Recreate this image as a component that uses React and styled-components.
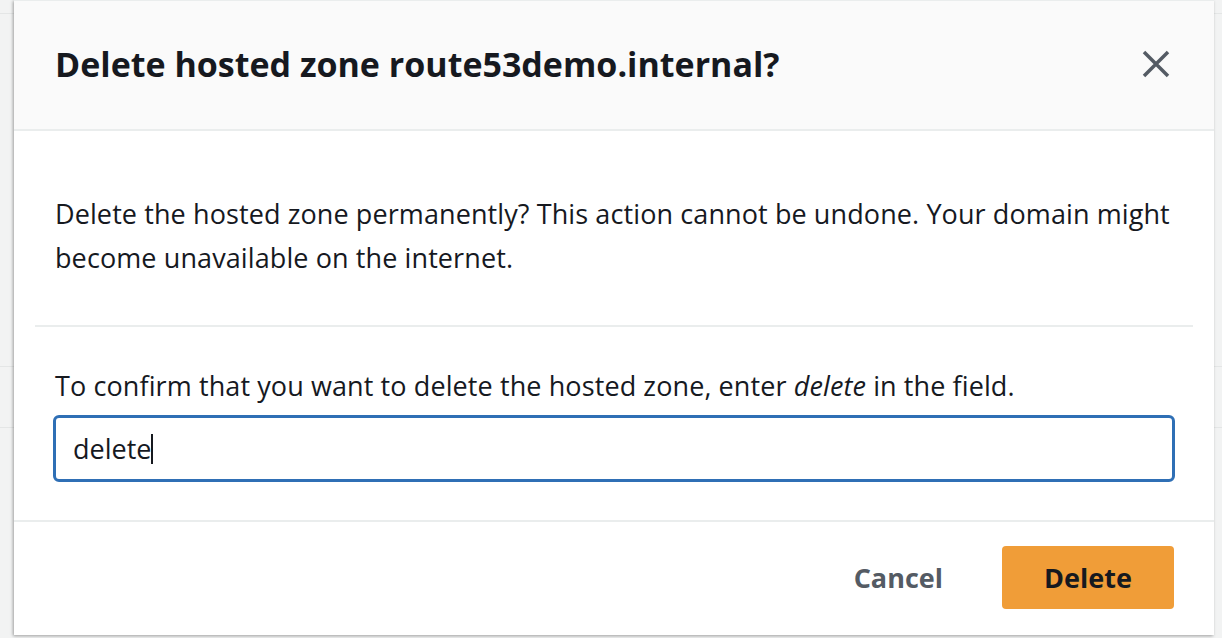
import styled, { createGlobalStyle } from "styled-components";

const GlobalStyle = createGlobalStyle`
  html, body {
    margin: 0;
    padding: 0;
    background: #f2f3f3;
    font-family: "Open Sans", "Noto Sans", sans-serif;
    color: #16191f;
  }
  * { box-sizing: border-box; }
`;

const Page = styled.div`
  position: relative;
  width: 1222px;
  height: 638px;
  overflow: hidden;
  background: #f2f3f3;
`;

const BackRow = styled.div`
  height: ${(p) => p.h}px;
  border-bottom: 1px solid #e4e6e6;
`;

const Overlay = styled.div`
  position: absolute;
  top: 0;
  left: 14px;
  width: 1200px;
`;

const Modal = styled.div`
  display: flex;
  flex-direction: column;
  background: #ffffff;
  height: 635px;
  box-shadow: -1px 1px 3px rgba(0, 0, 0, 0.35);
`;

const Header = styled.div`
  display: flex;
  align-items: center;
  justify-content: space-between;
  height: 131px;
  padding: 0 44px 2px 41px;
  background: #fafafa;
  border-top: 1px solid #eaeded;
  border-bottom: 2px solid #eaeded;
`;

const Title = styled.h2`
  margin: 0;
  font-size: 34px;
  font-weight: 700;
  color: #16191f;
`;

const CloseButton = styled.button`
  display: flex;
  align-items: center;
  justify-content: center;
  border: none;
  background: none;
  padding: 0;
  width: 28px;
  height: 28px;
  color: #545b64;
  cursor: pointer;
`;

const Body = styled.div`
  display: flex;
  flex-direction: column;
  padding: 61px 21px 38px;
  border-bottom: 2px solid #eaeded;
`;

const Section = styled.div`
  display: flex;
  flex-direction: column;
  padding: ${(p) => p.pad};
  border-bottom: ${(p) => (p.divided ? "2px solid #eaeded" : "none")};
`;

const Text = styled.p`
  margin: 0;
  padding-left: ${(p) => p.indent || 0}px;
  font-size: 27px;
  line-height: 44px;
  letter-spacing: 0.1px;
  color: #16191f;

  em {
    font-style: italic;
  }
`;

const Field = styled.div`
  display: flex;
  align-items: center;
  height: 67px;
  margin-top: 7px;
  padding: 0 17px;
  border: 3px solid #2f6fb5;
  border-radius: 6px;
  font-size: 27px;
  color: #16191f;
`;

const Caret = styled.span`
  display: inline-block;
  width: 2px;
  height: 30px;
  background: #16191f;
`;

const Footer = styled.div`
  flex: 1;
  display: flex;
  align-items: center;
  justify-content: flex-end;
  padding: 0 40px 2px 0;
`;

const LinkButton = styled.button`
  border: none;
  background: none;
  padding: 0 59px 0 0;
  font-family: inherit;
  font-size: 27px;
  font-weight: 700;
  color: #545b64;
  cursor: pointer;
`;

const PrimaryButton = styled.button`
  width: 172px;
  height: 63px;
  border: none;
  border-radius: 4px;
  background: #f09d38;
  font-family: inherit;
  font-size: 27px;
  font-weight: 700;
  color: #16191f;
  cursor: pointer;
`;

export default function App() {
  return (
    <>
      <GlobalStyle />
      <Page>
        <BackRow h={14} />
        <BackRow h={353} />
        <BackRow h={61} />
        <Overlay>
          <Modal>
            <Header>
              <Title>Delete hosted zone route53demo.internal?</Title>
              <CloseButton aria-label="Close">
                <svg width="28" height="28" viewBox="0 0 28 28">
                  <path
                    d="M2 2 L26 26 M26 2 L2 26"
                    stroke="currentColor"
                    strokeWidth="3.5"
                    fill="none"
                  />
                </svg>
              </CloseButton>
            </Header>
            <Body>
              <Section pad="0 20px 45px" divided>
                <Text>
                  Delete the hosted zone permanently? This action cannot be
                  undone. Your domain might become unavailable on the internet.
                </Text>
              </Section>
              <Section pad="37px 18px 0">
                <Text indent={2}>
                  To confirm that you want to delete the hosted zone, enter{" "}
                  <em>delete</em> in the field.
                </Text>
                <Field>
                  delete
                  <Caret />
                </Field>
              </Section>
            </Body>
            <Footer>
              <LinkButton>Cancel</LinkButton>
              <PrimaryButton>Delete</PrimaryButton>
            </Footer>
          </Modal>
        </Overlay>
      </Page>
    </>
  );
}
